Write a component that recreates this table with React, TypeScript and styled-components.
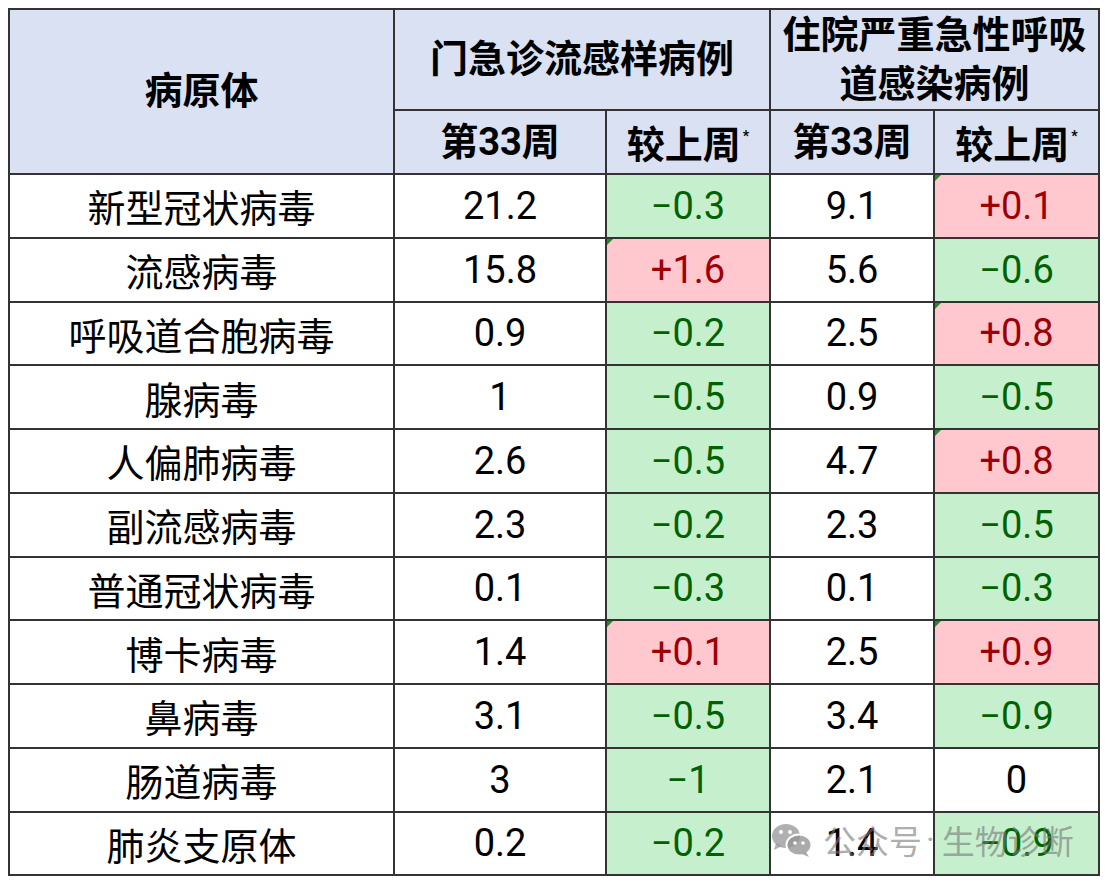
import React, { FC } from 'react';
import styled, { createGlobalStyle } from 'styled-components';

const GlobalStyle = createGlobalStyle`
  html, body {
    margin: 0;
    padding: 0;
    background: #fff;
  }
  body {
    font-family: Roboto, 'Noto Sans CJK SC', sans-serif;
    color: #000;
  }
`;

type Tone = 'up' | 'down' | 'flat';

interface Row {
  name: string;
  ili: string;
  iliDiff: string;
  sari: string;
  sariDiff: string;
}

const rows: Row[] = [
  { name: '新型冠状病毒', ili: '21.2', iliDiff: '-0.3', sari: '9.1', sariDiff: '+0.1' },
  { name: '流感病毒', ili: '15.8', iliDiff: '+1.6', sari: '5.6', sariDiff: '-0.6' },
  { name: '呼吸道合胞病毒', ili: '0.9', iliDiff: '-0.2', sari: '2.5', sariDiff: '+0.8' },
  { name: '腺病毒', ili: '1', iliDiff: '-0.5', sari: '0.9', sariDiff: '-0.5' },
  { name: '人偏肺病毒', ili: '2.6', iliDiff: '-0.5', sari: '4.7', sariDiff: '+0.8' },
  { name: '副流感病毒', ili: '2.3', iliDiff: '-0.2', sari: '2.3', sariDiff: '-0.5' },
  { name: '普通冠状病毒', ili: '0.1', iliDiff: '-0.3', sari: '0.1', sariDiff: '-0.3' },
  { name: '博卡病毒', ili: '1.4', iliDiff: '+0.1', sari: '2.5', sariDiff: '+0.9' },
  { name: '鼻病毒', ili: '3.1', iliDiff: '-0.5', sari: '3.4', sariDiff: '-0.9' },
  { name: '肠道病毒', ili: '3', iliDiff: '-1', sari: '2.1', sariDiff: '0' },
  { name: '肺炎支原体', ili: '0.2', iliDiff: '-0.2', sari: '1.4', sariDiff: '-0.9' },
];

const toneOf = (v: string): Tone => (v.startsWith('+') ? 'up' : v.startsWith('-') ? 'down' : 'flat');
const show = (v: string) => v.replace(/^-/, '\u2212');

const Page = styled.div`
  position: relative;
  padding: 8px;
  width: 1108px;
  box-sizing: border-box;
`;

const Table = styled.table`
  border-collapse: collapse;
  table-layout: fixed;
  width: 1090px;
  border: 2px solid #333;
`;

const Head = styled.th<{ $h: number }>`
  height: ${(p) => p.$h}px;
  padding: 0;
  background: #d9e1f2;
  border: 2px solid #333;
  font-weight: 700;
  font-size: 38px;
  line-height: 49px;
  text-align: center;
  vertical-align: middle;
`;

const Star = styled.sup`
  font-size: 14px;
  font-weight: 700;
  position: relative;
  top: -3px;
  margin-left: 2px;
`;

const Cell = styled.td<{ $tone?: Tone }>`
  height: 61.75px;
  padding: 0;
  border: 2px solid #333;
  font-size: 38px;
  text-align: center;
  vertical-align: middle;
  position: relative;
  background: ${(p) => (p.$tone === 'up' ? '#ffc7ce' : p.$tone === 'down' ? '#c6efce' : '#fff')};
  color: ${(p) => (p.$tone === 'up' ? '#9c0006' : p.$tone === 'down' ? '#006100' : '#000')};
`;

// excel "number stored as text" marker
const Flag = styled.span`
  position: absolute;
  left: 0;
  top: 0;
  width: 0;
  height: 0;
  border-top: 6px solid #1f8f1f;
  border-right: 6px solid transparent;
`;

const Watermark = styled.div`
  position: absolute;
  left: 771px;
  top: 822px;
  display: flex;
  align-items: center;
  gap: 10px;
  font-family: 'Noto Sans CJK SC', sans-serif;
  font-size: 33px;
  line-height: 36px;
  color: rgba(120, 120, 120, 0.62);
  pointer-events: none;
  white-space: pre;
`;

const MarkText = styled.span`
  display: flex;
  align-items: center;
`;

const Dot = styled.span`
  font-family: Roboto, sans-serif;
  margin: 0 7px 0 4px;
`;

const WeChat: FC = () => (
  <svg width="42" height="34" viewBox="0 0 42 34">
    <g fill="rgba(150,150,150,0.75)">
      <ellipse cx="15" cy="13" rx="14" ry="12" />
      <path d="M5 20 L3 27 L11 23 Z" />
    </g>
    <g fill="rgba(150,150,150,0.8)" stroke="#fff" strokeWidth="2">
      <ellipse cx="28" cy="22" rx="12.5" ry="10.5" />
    </g>
    <path d="M35 29 L38 34 L31 31 Z" fill="rgba(150,150,150,0.8)" />
    <g fill="#fff">
      <circle cx="10" cy="9" r="2" />
      <circle cx="19" cy="9" r="2" />
      <circle cx="24" cy="20" r="1.8" />
      <circle cx="32" cy="20" r="1.8" />
    </g>
  </svg>
);

const Diff: FC<{ v: string }> = ({ v }) => {
  const tone = toneOf(v);
  return (
    <Cell $tone={tone}>
      {tone === 'up' && <Flag />}
      {show(v)}
    </Cell>
  );
};

const App: FC = () => (
  <>
    <GlobalStyle />
    <Page>
      <Table>
        <colgroup>
          <col style={{ width: 385 }} />
          <col style={{ width: 212 }} />
          <col style={{ width: 164 }} />
          <col style={{ width: 164 }} />
          <col style={{ width: 165 }} />
        </colgroup>
        <thead>
          <tr>
            <Head $h={99} rowSpan={2}>
              病原体
            </Head>
            <Head $h={99} colSpan={2}>
              门急诊流感样病例
            </Head>
            <Head $h={99} colSpan={2}>
              住院严重急性呼吸
              <br />
              道感染病例
            </Head>
          </tr>
          <tr>
            <Head $h={62}>第33周</Head>
            <Head $h={62}>
              较上周<Star>*</Star>
            </Head>
            <Head $h={62}>第33周</Head>
            <Head $h={62}>
              较上周<Star>*</Star>
            </Head>
          </tr>
        </thead>
        <tbody>
          {rows.map((r) => (
            <tr key={r.name}>
              <Cell>{r.name}</Cell>
              <Cell>{r.ili}</Cell>
              <Diff v={r.iliDiff} />
              <Cell>{r.sari}</Cell>
              <Diff v={r.sariDiff} />
            </tr>
          ))}
        </tbody>
      </Table>
      <Watermark>
        <WeChat />
        <MarkText>
          公众号<Dot>·</Dot>生物诊断
        </MarkText>
      </Watermark>
    </Page>
  </>
);

export default App;
